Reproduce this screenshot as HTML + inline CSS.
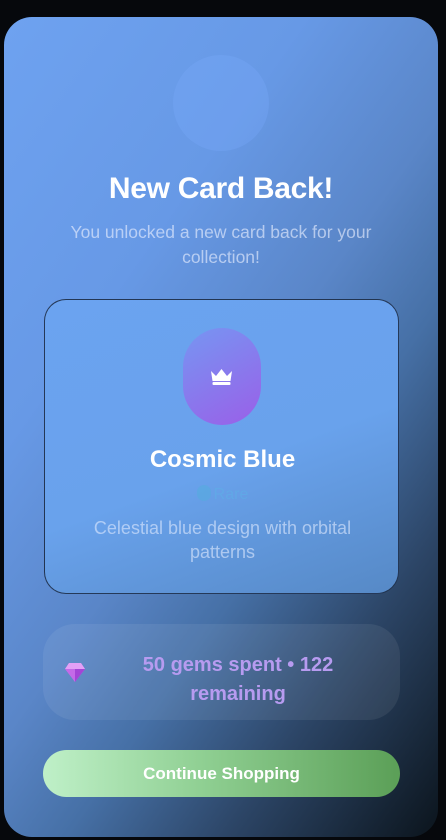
<!DOCTYPE html>
<html><head><meta charset="utf-8"><style>
*{margin:0;padding:0;box-sizing:border-box}
body{width:446px;height:840px;background:#06080c;overflow:hidden;font-family:"Liberation Sans",sans-serif;position:relative}
.m{position:absolute;left:4px;top:17px;width:434px;height:820px;border-radius:28px;background:linear-gradient(125deg,#6ea2f0 0%,#6799e6 30%,#5a86c8 50%,#4670a6 63%,#2c4566 79%,#0b141c 100%);overflow:hidden}
.c{position:absolute;left:169px;top:38px;width:96px;height:96px;border-radius:50%;background:rgba(120,170,250,0.35)}
.t{position:absolute;left:0;width:434px;text-align:center}
.card{position:absolute;left:40px;top:282px;width:355px;height:295px;border-radius:22px;border:1px solid rgba(20,30,50,0.8);background:linear-gradient(160deg,#6ba3f0 0%,#69a2ec 55%,#5689c6 100%)}
.pill{position:absolute;left:138px;top:28px;width:78px;height:97px;border-radius:40px;background:linear-gradient(150deg,#7696f2,#9a5fe8)}
.gem{position:absolute;left:39px;top:607px;width:357px;height:96px;border-radius:32px;background:rgba(255,255,255,0.07)}
.btn{position:absolute;left:39px;top:733px;width:357px;height:47px;border-radius:24px;background:linear-gradient(90deg,#bff0c8,#8fcf92 45%,#5b9f57);color:#fff;font-weight:bold;font-size:17px;text-align:center;line-height:47px}
</style></head><body>
<div class="m">
<div class="c"></div>
<div class="t" style="top:155px;font-size:30px;font-weight:bold;color:#fff;letter-spacing:-0.3px">New Card Back!</div>
<div class="t" style="top:203px;font-size:17.5px;line-height:25px;color:rgba(235,240,255,0.62)">You unlocked a new card back for your<br>collection!</div>
<div class="card">
<div class="pill"><svg style="position:absolute;left:27px;top:41px" width="23" height="16" viewBox="0 0 23 16"><path d="M1 2 L6 7 L11.5 0 L17 7 L22 2 L20.5 12 L2.5 12 Z" fill="#fff"/><rect x="2.5" y="13" width="18" height="3" rx="1" fill="#fff"/></svg></div>
<div style="position:absolute;left:0;width:355px;top:146px;text-align:center;font-size:24px;font-weight:bold;color:#fff">Cosmic Blue</div>
<div style="position:absolute;left:0;width:355px;top:185px;text-align:center;font-size:16px;color:rgba(90,180,230,0.45)"><span style="display:inline-block;width:14px;height:16px;border-radius:7px;background:rgba(80,175,220,0.45);vertical-align:-2px;margin-right:3px"></span>Rare</div>
<div style="position:absolute;left:0;width:355px;top:216px;text-align:center;font-size:18px;line-height:24px;color:rgba(225,235,255,0.6)">Celestial blue design with orbital<br>patterns</div>
</div>
<div class="gem">
<svg style="position:absolute;left:22px;top:39px" width="20" height="19" viewBox="0 0 20 19"><path d="M4 0 H16 L20 6 L10 19 L0 6 Z" fill="#c46ae8"/><path d="M4 0 H16 L20 6 H0 Z" fill="#e3a0f6"/><path d="M10 6 L20 6 L10 19 Z" fill="#a445d6"/></svg>
<div style="position:absolute;left:40px;width:310px;top:27px;text-align:center;font-size:20px;line-height:29px;font-weight:bold;color:#b79bf0">50 gems spent • 122<br>remaining</div>
</div>
<div class="btn">Continue Shopping</div>
</div>
</body></html>
